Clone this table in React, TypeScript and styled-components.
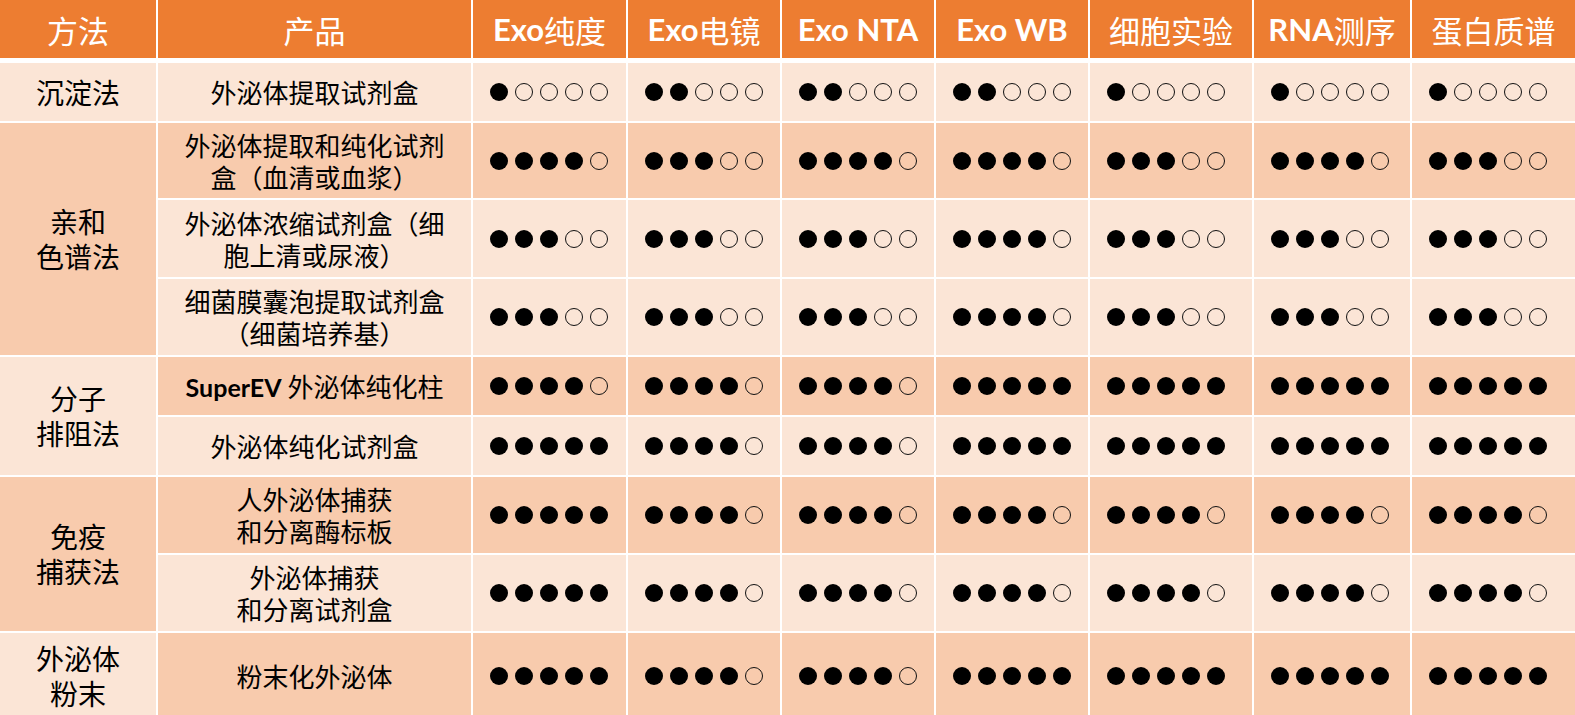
import React from "react";
import styled, { createGlobalStyle } from "styled-components";

const GlobalStyle = createGlobalStyle`
  html, body { margin: 0; padding: 0; background: #ffffff; overflow: hidden; }
  body { font-family: "Noto Sans CJK SC", "Noto Sans", sans-serif; }
`;

const COLS = "156px 313px 153px 152px 152px 152px 162px 156px 163px";
const LIGHT = "#FBE5D6";
const DARK = "#F8CBAD";

const Table = styled.div`
  width: 1575px;
  background: #ffffff;
  display: flex;
  flex-direction: column;
  gap: 5px;
`;

const HeaderRow = styled.div`
  display: grid;
  grid-template-columns: ${COLS};
  column-gap: 2px;
  height: 58px;
`;

const HeadCell = styled.div`
  background: #ed7d31;
  color: #ffffff;
  display: flex;
  align-items: center;
  justify-content: center;
  font-family: "Noto Sans CJK SC", sans-serif;
  font-size: 31px;
  font-weight: 400;
  white-space: nowrap;
`;

const Latin = styled.span<{ $size?: number }>`
  font-family: Lato, "Open Sans", sans-serif;
  font-weight: 700;
  ${(p) => (p.$size ? `font-size: ${p.$size}px;` : "")}
`;

const Body = styled.div`
  display: grid;
  grid-template-columns: ${COLS};
  grid-template-rows: 58px 75px 77px 76px 58px 58px 76px 76px 86px;
  gap: 2px;
`;

const MethodCell = styled.div<{ $dark: boolean; $span: number }>`
  grid-column: 1;
  grid-row: span ${(p) => p.$span};
  background: ${(p) => (p.$dark ? DARK : LIGHT)};
  display: flex;
  align-items: center;
  justify-content: center;
  text-align: center;
  font-size: 28px;
  line-height: 35px;
  color: #000;
`;

const ProductCell = styled.div<{ $dark: boolean }>`
  grid-column: 2;
  background: ${(p) => (p.$dark ? DARK : LIGHT)};
  display: flex;
  align-items: center;
  justify-content: center;
  text-align: center;
  font-size: 26px;
  line-height: 32px;
  color: #000;
`;

const DataCell = styled.div<{ $dark: boolean }>`
  background: ${(p) => (p.$dark ? DARK : LIGHT)};
  display: flex;
  align-items: center;
  padding-left: 17px;
  gap: 7px;
`;

const Dot = styled.span<{ $on: boolean }>`
  box-sizing: border-box;
  width: 18px;
  height: 18px;
  border-radius: 50%;
  background: ${(p) => (p.$on ? "#000" : "transparent")};
  border: ${(p) => (p.$on ? "none" : "1.5px solid #111")};
  flex: none;
`;

type Row = {
  method?: { lines: string[]; span: number; dark: boolean };
  product: React.ReactNode;
  dark: boolean;
  scores: number[];
};

const rows: Row[] = [
  {
    method: { lines: ["沉淀法"], span: 1, dark: false },
    product: "外泌体提取试剂盒",
    dark: false,
    scores: [1, 2, 2, 2, 1, 1, 1],
  },
  {
    method: { lines: ["亲和", "色谱法"], span: 3, dark: true },
    product: (
      <>
        外泌体提取和纯化试剂
        <br />
        盒（血清或血浆）
      </>
    ),
    dark: true,
    scores: [4, 3, 4, 4, 3, 4, 3],
  },
  {
    product: (
      <>
        外泌体浓缩试剂盒（细
        <br />
        胞上清或尿液）
      </>
    ),
    dark: false,
    scores: [3, 3, 3, 4, 3, 3, 3],
  },
  {
    product: (
      <>
        细菌膜囊泡提取试剂盒
        <br />
        （细菌培养基）
      </>
    ),
    dark: false,
    scores: [3, 3, 3, 4, 3, 3, 3],
  },
  {
    method: { lines: ["分子", "排阻法"], span: 2, dark: false },
    product: (
      <>
        <Latin $size={25}>SuperEV</Latin> 外泌体纯化柱
      </>
    ),
    dark: true,
    scores: [4, 4, 4, 5, 5, 5, 5],
  },
  {
    product: "外泌体纯化试剂盒",
    dark: false,
    scores: [5, 4, 4, 5, 5, 5, 5],
  },
  {
    method: { lines: ["免疫", "捕获法"], span: 2, dark: true },
    product: (
      <>
        人外泌体捕获
        <br />
        和分离酶标板
      </>
    ),
    dark: true,
    scores: [5, 4, 4, 4, 4, 4, 4],
  },
  {
    product: (
      <>
        外泌体捕获
        <br />
        和分离试剂盒
      </>
    ),
    dark: false,
    scores: [5, 4, 4, 4, 4, 4, 4],
  },
  {
    method: { lines: ["外泌体", "粉末"], span: 1, dark: false },
    product: "粉末化外泌体",
    dark: true,
    scores: [5, 4, 4, 5, 5, 5, 5],
  },
];

const Rating = ({ value, dark }: { value: number; dark: boolean }) => (
  <DataCell $dark={dark} aria-label={"●".repeat(value) + "○".repeat(5 - value)}>
    {[0, 1, 2, 3, 4].map((i) => (
      <Dot key={i} $on={i < value} />
    ))}
  </DataCell>
);

export default function App() {
  return (
    <>
      <GlobalStyle />
      <Table>
        <HeaderRow>
          <HeadCell>方法</HeadCell>
          <HeadCell>产品</HeadCell>
          <HeadCell>
            <Latin>Exo</Latin>纯度
          </HeadCell>
          <HeadCell>
            <Latin>Exo</Latin>电镜
          </HeadCell>
          <HeadCell>
            <Latin>Exo NTA</Latin>
          </HeadCell>
          <HeadCell>
            <Latin>Exo WB</Latin>
          </HeadCell>
          <HeadCell>细胞实验</HeadCell>
          <HeadCell>
            <Latin>RNA</Latin>测序
          </HeadCell>
          <HeadCell>蛋白质谱</HeadCell>
        </HeaderRow>
        <Body>
          {rows.map((r, idx) => (
            <React.Fragment key={idx}>
              {r.method && (
                <MethodCell $dark={r.method.dark} $span={r.method.span}>
                  <div>
                    {r.method.lines.map((l, i) => (
                      <div key={i}>{l}</div>
                    ))}
                  </div>
                </MethodCell>
              )}
              <ProductCell $dark={r.dark}>
                <div>{r.product}</div>
              </ProductCell>
              {r.scores.map((s, i) => (
                <Rating key={i} value={s} dark={r.dark} />
              ))}
            </React.Fragment>
          ))}
        </Body>
      </Table>
    </>
  );
}
